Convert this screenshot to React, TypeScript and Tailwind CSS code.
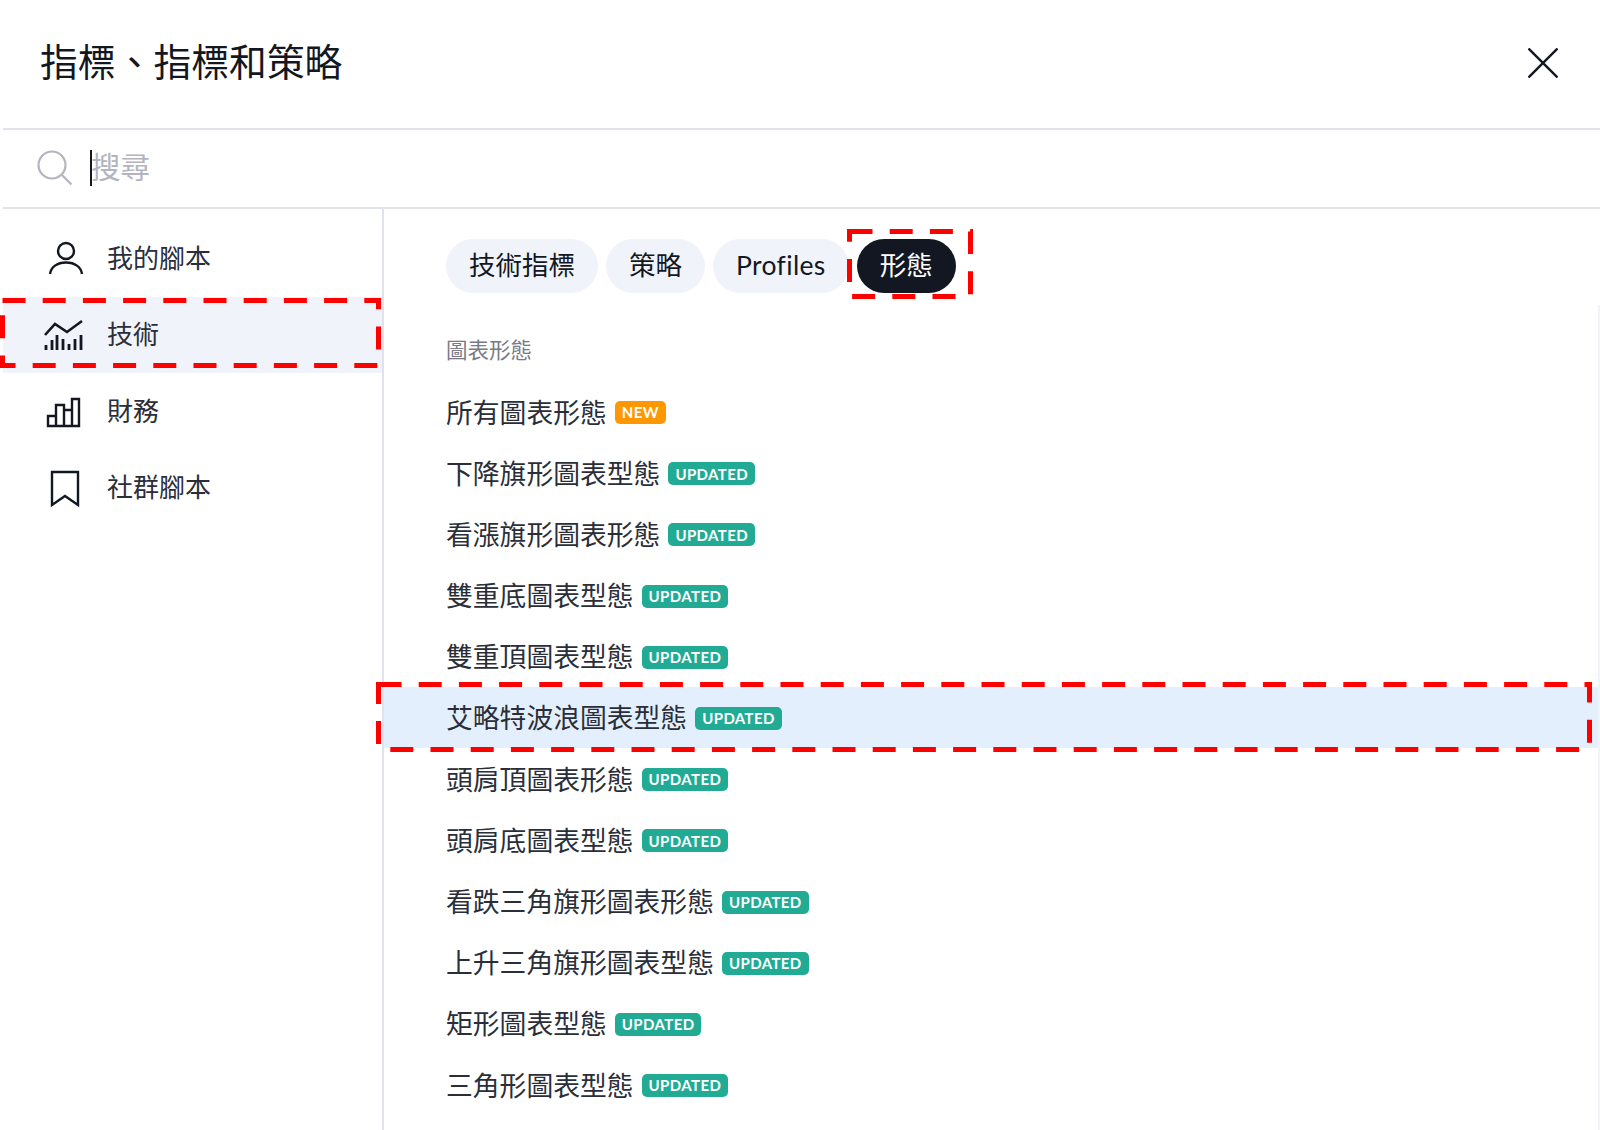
import { ReactNode } from 'react';

const CJK = "font-['Lato','Noto_Sans_CJK_TC',sans-serif]";

const patterns: { label: string; badge: 'NEW' | 'UPDATED'; active?: boolean }[] = [
  { label: '所有圖表形態', badge: 'NEW' },
  { label: '下降旗形圖表型態', badge: 'UPDATED' },
  { label: '看漲旗形圖表形態', badge: 'UPDATED' },
  { label: '雙重底圖表型態', badge: 'UPDATED' },
  { label: '雙重頂圖表型態', badge: 'UPDATED' },
  { label: '艾略特波浪圖表型態', badge: 'UPDATED', active: true },
  { label: '頭肩頂圖表形態', badge: 'UPDATED' },
  { label: '頭肩底圖表型態', badge: 'UPDATED' },
  { label: '看跌三角旗形圖表形態', badge: 'UPDATED' },
  { label: '上升三角旗形圖表型態', badge: 'UPDATED' },
  { label: '矩形圖表型態', badge: 'UPDATED' },
  { label: '三角形圖表型態', badge: 'UPDATED' },
];

function IconBox({ children }: { children: ReactNode }) {
  return (
    <svg viewBox="0 0 42 42" fill="none" stroke="#131722" strokeWidth="2.4" className="w-[42px] h-[42px] shrink-0">
      {children}
    </svg>
  );
}

function SideItem({ icon, label, active }: { icon: ReactNode; label: string; active?: boolean }) {
  return (
    <div className={`h-[76.5px] flex items-center pl-[41px] gap-[21px] ${active ? 'bg-[#f0f3fa]' : ''}`}>
      <IconBox>{icon}</IconBox>
      <span className="text-[26px] text-[#2a2e39]">{label}</span>
    </div>
  );
}

function Tab({ label, active, className = '' }: { label: string; active?: boolean; className?: string }) {
  return (
    <div
      className={`h-[54px] px-[23px] rounded-full flex items-center text-[26.5px] ${className} ${
        active ? 'bg-[#131722] text-white' : 'bg-[#f0f3fa] text-[#131722]'
      }`}
    >
      {label}
    </div>
  );
}

// the red dashed callouts sit on top of the screenshot
function Callout({ className, w, h }: { className: string; w: number; h: number }) {
  return (
    <svg className={`absolute ${className}`} width={w} height={h} fill="none">
      <rect x="2.5" y="2.5" width={w - 5} height={h - 5} stroke="#ff0000" strokeWidth="5" strokeDasharray="23 17.2" />
    </svg>
  );
}

export default function App() {
  return (
    <div className={`relative w-[1600px] h-[1130px] overflow-hidden bg-white pl-[3px] ${CJK}`}>
      <div className="h-[128px] flex items-center justify-between pl-[37px] pr-[42px] pb-[3px]">
        <h1 className="text-[37.8px] text-[#131722]">指標、指標和策略</h1>
        <svg viewBox="0 0 30 30" stroke="#131722" strokeWidth="2.4" className="w-[30px] h-[30px]">
          <path d="M0.5 0.5L29.5 29.5M29.5 0.5L0.5 29.5" />
        </svg>
      </div>

      <div className="h-[81px] border-y-2 border-[#e0e3eb] flex items-center pl-[34px] pb-[2px]">
        <svg viewBox="0 0 36 36" fill="none" stroke="#b2b5be" strokeWidth="2.2" className="w-[36px] h-[36px] shrink-0">
          <circle cx="15" cy="15" r="13.5" />
          <path d="M25 25L34.5 34.5" />
        </svg>
        <div className="w-[2px] h-[36px] bg-[#131722] ml-[17px] shrink-0" />
        <input
          placeholder="搜尋"
          className="flex-1 -ml-px outline-none text-[29.5px] placeholder:text-[#b2b5be] bg-transparent"
        />
      </div>

      <div className="flex h-[921px]">
        <aside className="w-[381px] shrink-0 border-r-2 border-[#e0e3eb] pt-[11px]">
          <SideItem
            label="我的腳本"
            icon={
              <>
                <circle cx="22" cy="14" r="8" />
                <path d="M6 37C7 30 13 25.5 22 25.5S37 30 38 37" />
              </>
            }
          />
          <SideItem
            active
            label="技術"
            icon={
              <>
                <path d="M1 21L11 10L23 18L38 7" strokeWidth="2.6" />
                <path
                  d="M2 36V31M8 36V26M13 36V21M19 36V25M25 36V30M31 36V25M37 36V21"
                  strokeWidth="2.8"
                />
              </>
            }
          />
          <SideItem
            label="財務"
            icon={<path d="M4 36V26H12V36ZM12 36V15H20V36ZM20 20H28M28 36V9H35V36ZM4 36H35" />}
          />
          <SideItem label="社群腳本" icon={<path d="M8 5H34V38L21 29L8 38Z" />} />
        </aside>

        <main className="flex-1 pr-[2px]">
          <div className="flex gap-2 pt-[30px] pl-[62px]">
            <Tab label="技術指標" />
            <Tab label="策略" />
            <Tab label="Profiles" className="tracking-[0.35px]" />
            <Tab label="形態" active />
          </div>
          <div className="pl-[62px] h-[88px] pt-[43px] text-[21.5px] leading-[28px] text-[#787b86]">圖表形態</div>
          <div>
            {patterns.map((p) => (
              <div
                key={p.label}
                className={`h-[61.2px] flex items-center pl-[62px] pt-[2px] gap-2 ${p.active ? 'bg-[#e3effd]' : ''}`}
              >
                <span className="text-[26.8px] text-[#2a2e39]">{p.label}</span>
                <span
                  className={`h-[23px] px-[7px] rounded-[5px] flex items-center text-[15px] font-bold tracking-[0.4px] text-white ${
                    p.badge === 'NEW' ? 'bg-[#ff9800]' : 'bg-[#22ab94]'
                  }`}
                >
                  {p.badge}
                </span>
              </div>
            ))}
          </div>
        </main>
        <div className="w-[2px] mt-[96px] bg-[#f0f3fa] shrink-0 -ml-[2px]" />
      </div>

      <Callout className="left-0 top-[298px]" w={381} h={70} />
      <Callout className="left-[376px] top-[682px]" w={1216} h={70} />
      <Callout className="left-[847px] top-[229px]" w={126} h={70} />
    </div>
  );
}
